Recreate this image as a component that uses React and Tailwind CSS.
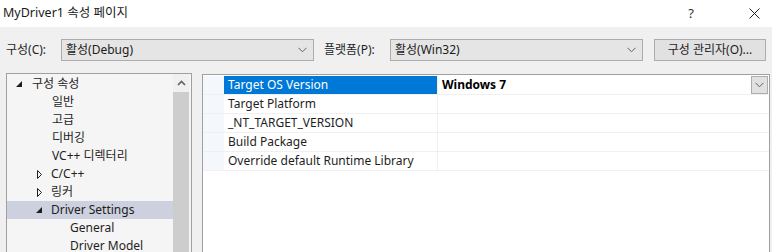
import React from "react";

const font = { fontFamily: '"Noto Sans", "Noto Sans CJK KR", sans-serif' };

function Chevron({ className = "" }) {
  return (
    <svg width="9" height="6" viewBox="0 0 9 6" className={className}>
      <path d="M0.5 0.8 L4.5 4.8 L8.5 0.8" fill="none" stroke="#5f5f5f" strokeWidth="1" />
    </svg>
  );
}

function Combo({ label, width }) {
  return (
    <div
      className="flex h-[22px] items-center justify-between border border-[#adadad] bg-[#e5e5e5] pl-[4px] pr-[6px]"
      style={{ width }}
    >
      <span className="text-[12px] text-[#1b1b1b]">{label}</span>
      <Chevron />
    </div>
  );
}

function Expanded() {
  return (
    <svg width="6" height="6" viewBox="0 0 6 6">
      <path d="M6 0 L6 6 L0 6 Z" fill="#1e1e1e" />
    </svg>
  );
}

function Collapsed() {
  return (
    <svg width="5" height="9" viewBox="0 0 5 9">
      <path d="M0.5 0.5 L4.5 4.5 L0.5 8.5 Z" fill="none" stroke="#1e1e1e" strokeWidth="1" />
    </svg>
  );
}

const tree = [
  { text: "구성 속성", indent: 11, icon: "open", textX: 32 },
  { text: "일반", textX: 52 },
  { text: "고급", textX: 52 },
  { text: "디버깅", textX: 52 },
  { text: "VC++ 디렉터리", textX: 52 },
  { text: "C/C++", indent: 31, icon: "closed", textX: 51 },
  { text: "링커", indent: 31, icon: "closed", textX: 51 },
  { text: "Driver Settings", indent: 31, icon: "open", textX: 51, selected: true },
  { text: "General", textX: 70 },
  { text: "Driver Model", textX: 70 },
];

const props = [
  "Target OS Version",
  "Target Platform",
  "_NT_TARGET_VERSION",
  "Build Package",
  "Override default Runtime Library",
];

export default function App() {
  return (
    <div className="h-[252px] w-[772px] overflow-hidden bg-[#f0f0f0] text-[12px] text-[#1e1e1e]" style={font}>
      {/* title bar */}
      <div className="flex h-[27px] items-center bg-white pl-[3px]">
        <span className="text-[12.5px] text-[#1b1b1b]">MyDriver1 속성 페이지</span>
        <span className="ml-auto mr-[55px] text-[13px] text-[#333]">?</span>
        <svg width="11" height="11" viewBox="0 0 11 11" className="mr-[12px]">
          <path d="M0.5 0.5 L10.5 10.5 M10.5 0.5 L0.5 10.5" stroke="#222" strokeWidth="1" />
        </svg>
      </div>

      {/* toolbar */}
      <div className="flex h-[46px] items-start pt-[12px] pl-[6px]">
        <span className="flex h-[22px] w-[55px] items-center">구성(C):</span>
        <Combo label="활성(Debug)" width={253} />
        <span className="ml-[10px] flex h-[22px] w-[66px] items-center">플랫폼(P):</span>
        <Combo label="활성(Win32)" width={253} />
        <div className="ml-[11px] flex h-[22px] w-[112px] items-center justify-center border border-[#adadad] bg-[#e1e1e1]">
          구성 관리자(O)...
        </div>
      </div>

      {/* panels */}
      <div className="flex pl-[6px]">
        <div className="flex h-[200px] w-[186px] border-l border-t border-r border-[#a0a0a0] bg-[#f5f5f5]">
          <div className="w-[166px] pt-[1px]">
            {tree.map((t) => (
              <div
                key={t.text}
                className={`relative flex h-[18px] items-center ${t.selected ? "bg-[#ccd0df]" : ""}`}
              >
                {t.icon && (
                  <span className="absolute flex items-center" style={{ left: t.indent - 1 + (t.icon === "closed" ? 0 : -1) }}>
                    {t.icon === "open" ? <Expanded /> : <Collapsed />}
                  </span>
                )}
                <span className="absolute" style={{ left: t.textX - 7 }}>{t.text}</span>
              </div>
            ))}
          </div>
          <div className="flex w-[16px] flex-col">
            <div className="flex h-[18px] items-center justify-center bg-[#f0f0f0]">
              <svg width="9" height="6" viewBox="0 0 9 6">
                <path d="M1 5 L4.5 1.5 L8 5" fill="none" stroke="#606060" strokeWidth="1.6" />
              </svg>
            </div>
            <div className="flex-1 bg-[#cdcdcd]" />
          </div>
        </div>

        <div className="ml-[10px] mt-[1px] h-[200px] w-[568px] border-l border-t border-r border-[#a0a0a0] bg-white">
          <div className="pt-[1px]">
            {props.map((p, i) => (
              <div key={p} className="flex h-[19px] border-b border-[#f0f0f0]">
                <div className="w-[21px] bg-[#f4f7fc]" />
                <div
                  className={`flex w-[214px] items-center border-r border-[#f0f0f0] pl-[4px] ${
                    i === 0 ? "bg-[#0078d7] text-white" : ""
                  }`}
                >
                  {p}
                </div>
                <div className="flex flex-1 items-center pl-[4px]">
                  {i === 0 && (
                    <>
                      <span className="font-bold text-black">Windows 7</span>
                      <div className="ml-auto mr-[1px] flex h-[18px] w-[17px] items-center justify-center border border-[#adadad] bg-[#e1e1e1]">
                        <Chevron />
                      </div>
                    </>
                  )}
                </div>
              </div>
            ))}
          </div>
        </div>
      </div>
    </div>
  );
}
